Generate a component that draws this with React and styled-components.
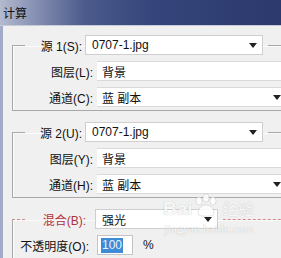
import React from 'react'
import styled, { createGlobalStyle } from 'styled-components'

const GlobalStyle = createGlobalStyle`
  body {
    margin: 0;
    overflow: hidden;
    font-family: "Liberation Sans", "Noto Sans CJK SC", sans-serif;
    font-size: 12px;
    color: #111;
  }
`

const Arrow = () => (
  <svg width="8" height="5" viewBox="0 0 8 5">
    <path d="M0 0 H8 L4 5 Z" fill="#222" />
  </svg>
)

const App = () => {
  return (
    <Window>
      <GlobalStyle />
      <TitleBar>计算</TitleBar>
      <Body>
        <Group>
          <Legend>
            <LegendLabel $w={57}>源 1(S):</LegendLabel>
            <Select $w={178}>
              <span>0707-1.jpg</span>
              <Arrow />
            </Select>
          </Legend>
          <Row>
            <RowLabel $w={80}>图层(L):</RowLabel>
            <Field $w={200}>背景</Field>
          </Row>
          <Row>
            <RowLabel $w={80}>通道(C):</RowLabel>
            <Field $w={188}>
              <span>蓝 副本</span>
              <Arrow />
            </Field>
          </Row>
        </Group>

        <Group>
          <Legend>
            <LegendLabel $w={57}>源 2(U):</LegendLabel>
            <Select $w={178}>
              <span>0707-1.jpg</span>
              <Arrow />
            </Select>
          </Legend>
          <Row>
            <RowLabel $w={80}>图层(Y):</RowLabel>
            <Field $w={200}>背景</Field>
          </Row>
          <Row>
            <RowLabel $w={80}>通道(H):</RowLabel>
            <Field $w={188}>
              <span>蓝 副本</span>
              <Arrow />
            </Field>
          </Row>
        </Group>

        <Group $marked>
          <Legend>
            <LegendLabel $w={61} $marked>混合(B):</LegendLabel>
            <Select $w={123} $gap={6}>
              <span>强光</span>
              <Arrow />
            </Select>
          </Legend>
          <Row>
            <RowLabel $w={76}>不透明度(O):</RowLabel>
            <Input>
              <Selected>100</Selected>
            </Input>
            <Unit>%</Unit>
          </Row>
        </Group>

        <Watermark>
          <Brand>
            Bai
            <Paw viewBox="0 0 26 24">
              <ellipse cx="6" cy="7" rx="3" ry="4" />
              <ellipse cx="13" cy="4" rx="3" ry="4" />
              <ellipse cx="20" cy="7" rx="3" ry="4" />
              <path d="M5 20 C5 13 10 11 13 11 C16 11 21 13 21 20 C21 23 5 23 5 20 Z" />
            </Paw>
            <span>经验</span>
          </Brand>
          <Site>jingyan.baidu.com</Site>
        </Watermark>
      </Body>
    </Window>
  )
}

const Window = styled.div`
  position: relative;
  width: 281px;
  height: 258px;
  overflow: hidden;
  display: flex;
  flex-direction: column;
  background: #f0f0f0;
`

const TitleBar = styled.div`
  height: 25px;
  flex-shrink: 0;
  display: flex;
  align-items: center;
  padding-left: 3px;
  background: linear-gradient(90deg, #b4bbd0 0%, #8e98b8 10%, #4c5b8c 30%, #35447a 55%, #2b396c 100%);
  border-bottom: 1px solid #c8ccd8;
  color: #111;
  font-size: 12px;
`

const Body = styled.div`
  position: relative;
  flex: 1;
  padding: 9px 0 0 9px;
  border-left: 3px solid #a3acc6;
`

const Group = styled.fieldset`
  margin: 0 -60px 11px 0;
  padding: 0 0 3px 0;
  border: 1px solid #a8a8a8;
  border-top-color: ${p => (p.$marked ? '#d08c8c' : '#a8a8a8')};
  border-top-style: ${p => (p.$marked ? 'dashed' : 'solid')};
  box-shadow: inset 1px 1px 0 #fbfbfb;
`

const Legend = styled.legend`
  margin-left: 12px;
  padding: 0 5px 0 0;
  display: flex;
  align-items: center;
`

const LegendLabel = styled.span`
  width: ${p => p.$w}px;
  text-align: right;
  margin-right: 3px;
  white-space: nowrap;
  color: ${p => (p.$marked ? '#b2323c' : '#111')};
`

const Select = styled.div`
  width: ${p => p.$w}px;
  height: 20px;
  box-sizing: border-box;
  margin-left: ${p => p.$gap || 0}px;
  display: flex;
  align-items: center;
  justify-content: space-between;
  padding: 0 5px 0 6px;
  background: #fff;
  border: 1px solid #cfcfcf;
`

const Row = styled.div`
  display: flex;
  align-items: center;
  height: 20px;
  margin-top: 6px;
`

const RowLabel = styled.span`
  width: ${p => p.$w}px;
  text-align: right;
  white-space: nowrap;
  margin-right: 4px;
`

const Field = styled.div`
  width: ${p => p.$w}px;
  height: 20px;
  box-sizing: border-box;
  display: flex;
  align-items: center;
  justify-content: space-between;
  padding: 0 4px 0 5px;
  background: #fff;
  border-top: 1px solid #dadada;
  border-bottom: 1px solid #dadada;
`

const Input = styled.div`
  width: 36px;
  height: 20px;
  box-sizing: border-box;
  margin-left: 4px;
  display: flex;
  align-items: center;
  padding-left: 3px;
  background: #fff;
  border: 1px solid #c4c4c4;
`

const Selected = styled.span`
  background: #3f8bd6;
  color: #eaf2ff;
  padding: 0 1px;
  line-height: 15px;
`

const Unit = styled.span`
  margin-left: 10px;
`

const Watermark = styled.div`
  position: absolute;
  left: 160px;
  top: 168px;
  display: flex;
  flex-direction: column;
  align-items: center;
  color: rgba(255, 255, 255, 0.9);
  text-shadow: 0 0 1px rgba(110, 110, 110, 0.45);
  pointer-events: none;
`

const Brand = styled.div`
  display: flex;
  align-items: flex-end;
  font-size: 19px;
  font-weight: bold;
  font-family: "Liberation Sans", "Noto Sans CJK SC", sans-serif;
  span {
    margin-left: 4px;
    font-size: 16px;
    font-weight: normal;
  }
`

const Paw = styled.svg`
  width: 26px;
  height: 24px;
  margin-bottom: 2px;
  fill: rgba(255, 255, 255, 0.85);
  stroke: rgba(120, 120, 120, 0.35);
  stroke-width: 0.6;
`

const Site = styled.div`
  margin-top: 2px;
  font-family: "Liberation Serif", serif;
  font-size: 12px;
`

export default App
